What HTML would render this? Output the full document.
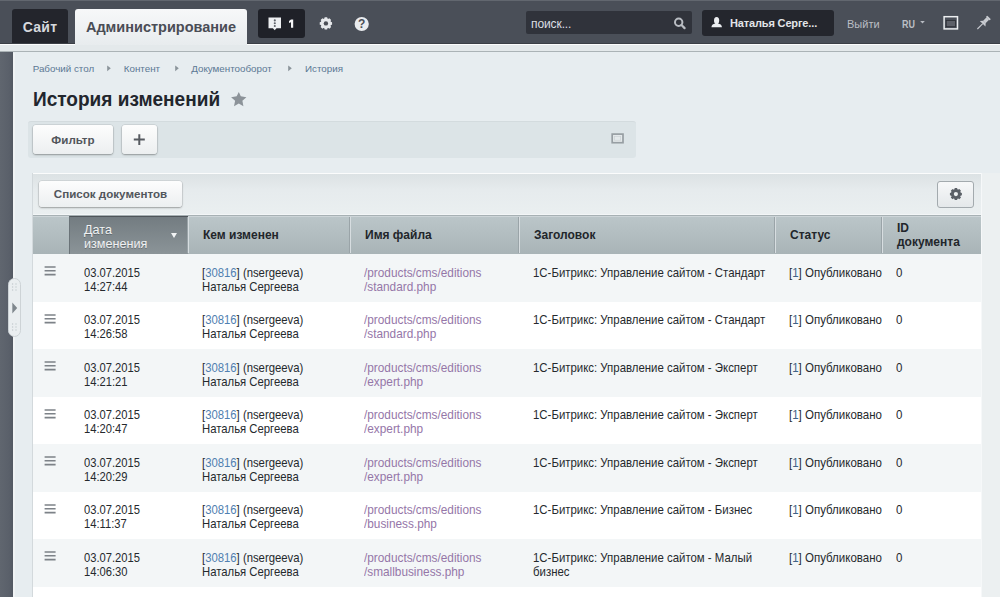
<!DOCTYPE html>
<html><head><meta charset="utf-8">
<style>
*{margin:0;padding:0;box-sizing:border-box}
html,body{width:1000px;height:597px;overflow:hidden;background:#e7edf0;font-family:"Liberation Sans",sans-serif}
.abs{position:absolute}
#top{position:absolute;left:0;top:0;width:1000px;height:43.5px;background:#4a4f58;border-top:1px solid #62676f;border-bottom:1px solid #3b3f46}
#strip{position:absolute;left:0;top:43.5px;width:1000px;height:7.5px;background:#e4e9eb;border-top:1.5px solid #fcfdfd}
#stripline{position:absolute;left:0;top:50.8px;width:1000px;height:1.5px;background:#abb3b6}
#side{position:absolute;left:0;top:52px;width:13px;height:545px;background:linear-gradient(90deg,#60666f,#5a606a 70%,#525862)}
#sidehl{position:absolute;left:13px;top:53px;width:2px;height:544px;background:#f0f3f4}
.tab-site{left:12px;top:9px;width:56px;height:34px;background:#23252c;border-radius:3px 3px 0 0;color:#d6d8dc;font-weight:bold;font-size:14px;line-height:36.2px;text-align:center;letter-spacing:0.3px}
.tab-adm{left:75px;top:9px;width:172px;height:36px;background:linear-gradient(#f7f8f9,#e8ecee);border-radius:3px 3px 0 0;color:#4a4d55;font-weight:bold;font-size:14.5px;line-height:36px;text-align:center}
.notif{left:258px;top:9px;width:47px;height:29px;background:#1f2128;border-radius:3px}
.search{left:526px;top:11px;width:166px;height:23px;background:#30333b;border-radius:2px;color:#dcdfe3;font-size:12px;line-height:26.4px;padding-left:5px;letter-spacing:-0.1px}
.user{left:702px;top:10px;width:132px;height:26px;background:#24262d;border-radius:3px;color:#e2e4e8;font-size:11px;font-weight:bold;line-height:26px;padding-left:28px;letter-spacing:-0.15px}
.exit{left:847px;top:17px;color:#babec4;font-size:11px;line-height:14px}
.ru{left:902px;top:16.6px;color:#bcc0c6;font-size:11.8px;font-weight:bold;line-height:14px;transform:scaleX(0.76);transform-origin:0 0}
.bc{top:62.6px;font-size:9.8px;color:#5b7894;line-height:12px}
.bcarr{top:65.4px;width:0;height:0;border-left:3.6px solid #8d969c;border-top:2.9px solid transparent;border-bottom:2.9px solid transparent}
.title{left:33.4px;top:88.4px;font-size:20px;font-weight:bold;color:#22262d;line-height:22px;transform:scaleX(0.952);transform-origin:0 0;white-space:nowrap}
#filter{left:28px;top:121px;width:608px;height:37px;background:#dce4e7;border-radius:3px;border-top:1px solid #d3dbde}
.btn{background:linear-gradient(#fdfdfd,#eceff0);border-radius:3px;box-shadow:0 1px 2px rgba(0,0,0,.3),0 0 0 0.5px rgba(0,0,0,.12);color:#52565c;font-weight:bold;font-size:11.6px;text-align:center}
#grid{left:33px;top:173px;width:948px;height:424px;background:#f3f6f7}
#gridtb{left:33px;top:173px;width:948px;height:42px;background:linear-gradient(#dce2e4,#e6ebed 40%,#eaeff0);border-top:1.5px solid #fbfcfc;border-bottom:1.5px solid #f3f6f7}
#hdr{left:33px;top:215px;width:948px;height:39.5px;background:linear-gradient(#bbc6c9,#a9b4b7);border-top:1px solid #a7b1b4;box-shadow:inset 0 1px 0 #cdd5d8;border-bottom:1.5px solid #8c969a}
.hcol{top:216px;height:38px;font-size:12px;font-weight:bold;color:#22262b;line-height:38px}
.vdiv{top:217px;width:2px;height:36px;border-left:1px solid #9aa4a8;border-right:1px solid #d7dde0}
.row{position:absolute;left:33px;width:948px;height:48px}
.row .cell{position:absolute;top:11.7px;font-size:12.4px;color:#25292d;line-height:14.2px;white-space:nowrap;transform-origin:0 0}
.row .lnk{color:#4f80b0}
.row .dt{transform:scaleX(0.903)}
.row .usr{transform:scaleX(0.913)}
.row .path{color:#9576a8;transform:scaleX(0.953)}
.row .ttl{transform:scaleX(0.921)}
.row .st{transform:scaleX(0.928)}
.row .ham{position:absolute}

</style></head><body>
<div id="top"></div>
<div id="strip"></div>
<div id="stripline"></div>
<div id="side"></div>
<div id="sidehl"></div>

<div class="abs tab-site">Сайт</div>
<div class="abs tab-adm">Администрирование</div>
<div class="abs notif"></div>
<div class="abs search">поиск...</div>
<div class="abs user">Наталья Серге...</div>
<svg class="abs" style="left:0;top:0" width="1000" height="43" viewBox="0 0 1000 43">
<path d="M268.5,17.6 H281 V28.3 H276.5 L274.7,30.2 L272.9,28.3 H268.5 Z" fill="#eef0f2"/>
<g fill="#5d6168"><circle cx="274.8" cy="20.4" r="1.05"/><circle cx="274.8" cy="23.2" r="1.05"/><circle cx="274.8" cy="26" r="1.05"/></g>
<path d="M291,19.6 H293.2 V27.7 H291 V22.3 L289,23 V21 Z" fill="#f3f4f6"/>
<path d="M330.53,21.79 L332.07,22.15 L332.07,24.65 L330.53,25.01 L330.31,25.54 L331.15,26.88 L329.38,28.65 L328.04,27.81 L327.51,28.03 L327.15,29.57 L324.65,29.57 L324.29,28.03 L323.76,27.81 L322.42,28.65 L320.65,26.88 L321.49,25.54 L321.27,25.01 L319.73,24.65 L319.73,22.15 L321.27,21.79 L321.49,21.26 L320.65,19.92 L322.42,18.15 L323.76,18.99 L324.29,18.77 L324.65,17.23 L327.15,17.23 L327.51,18.77 L328.04,18.99 L329.38,18.15 L331.15,19.92 L330.31,21.26Z" fill="#e6e8eb"/><circle cx="325.9" cy="23.4" r="5.00" fill="#e6e8eb"/><circle cx="325.9" cy="23.4" r="2.2" fill="#4b4e56"/>
<circle cx="361.7" cy="24" r="7.1" fill="#e9ebee"/>
<text x="361.7" y="28.4" text-anchor="middle" font-family="Liberation Sans" font-weight="bold" font-size="12" fill="#4b4e56">?</text>
<circle cx="678.7" cy="22.2" r="3.7" fill="none" stroke="#b9bdc3" stroke-width="2"/>
<path d="M681.5,25 L684.6,28.1" stroke="#b9bdc3" stroke-width="2.2" stroke-linecap="round"/>
<ellipse cx="716.6" cy="20.6" rx="2.6" ry="3.6" fill="#eceef1"/>
<path d="M711.5,27.3 C711.5,24.6 714,23.6 716.6,23.6 C719.2,23.6 721.9,24.6 721.9,27.3 Z" fill="#eceef1"/>
<path d="M920.2,21 H924.8 L922.5,23.4 Z" fill="#b8bcc2"/>
<rect x="944.1" y="16.7" width="13.4" height="12.2" fill="none" stroke="#eceef0" stroke-width="1.5"/>
<rect x="946.2" y="20.4" width="9.2" height="6.3" fill="#5d6068" stroke="#2a2c32" stroke-width="0.8"/>
<g transform="translate(983.2,23.2) rotate(45)" fill="#c9ccd1"><rect x="-2.6" y="-8.2" width="5.2" height="1.8" rx="0.6"/><rect x="-1.7" y="-6.6" width="3.4" height="5"/><path d="M-1.7,-1.8 L1.7,-1.8 L4,0.8 L-4,0.8 Z"/><rect x="-0.55" y="0.6" width="1.1" height="7.6"/></g>
</svg>

<div class="abs exit">Выйти</div>
<div class="abs ru">RU</div>

<div class="abs bc" style="left:32.7px">Рабочий стол</div>
<svg class="abs" style="left:107.2px;top:65px" width="5" height="7" viewBox="0 0 5 7"><path d="M0.2,0.4 L3.8,3.3 L0.2,6.2 Z" fill="#8b949a"/></svg>
<div class="abs bc" style="left:123.8px">Контент</div>
<svg class="abs" style="left:175.4px;top:65px" width="5" height="7" viewBox="0 0 5 7"><path d="M0.2,0.4 L3.8,3.3 L0.2,6.2 Z" fill="#8b949a"/></svg>
<div class="abs bc" style="left:191.2px">Документооборот</div>
<svg class="abs" style="left:288px;top:65px" width="5" height="7" viewBox="0 0 5 7"><path d="M0.2,0.4 L3.8,3.3 L0.2,6.2 Z" fill="#8b949a"/></svg>
<div class="abs bc" style="left:305px">История</div>

<div class="abs title">История изменений</div>

<div class="abs" id="filter"></div>
<svg class="abs" style="left:225px;top:86px" width="30" height="26" viewBox="225 86 30 26">
<path d="M238.8,92 L240.8,96.3 L246.4,97.3 L242.4,100.8 L243.4,106.2 L238.8,103.6 L234,106.2 L235.1,100.8 L231.1,97.3 L236.7,96.3 Z" fill="#8c9399"/>
</svg>
<svg class="abs" style="left:605px;top:128px" width="25" height="20" viewBox="605 128 25 20">
<rect x="612.2" y="134.1" width="10.8" height="8.6" fill="#e4e9eb" stroke="#979ea3" stroke-width="1.7"/><rect x="614.5" y="136.6" width="6.2" height="3.6" fill="none" stroke="#c9cfd2" stroke-width="0.6"/>
</svg>
<div class="abs btn" style="left:33px;top:125px;width:80px;height:29px;line-height:29px">Фильтр</div>
<div class="abs btn" style="left:122px;top:125px;width:35px;height:29px"></div>
<svg class="abs" style="left:122px;top:125px" width="35" height="29" viewBox="122 125 35 29"><path d="M139.3,134.2 V145 M133.8,139.6 H144.8" stroke="#575b61" stroke-width="2"/></svg>

<div class="abs" style="left:981px;top:173px;width:19px;height:424px;background:#ecf0f1;border-left:1.5px solid #f6f8f9"></div>
<div class="abs" id="grid"></div>
<div class="abs" id="gridtb"></div>
<div class="abs" style="left:32px;top:173px;width:1px;height:424px;background:#d3d9dc"></div>
<div class="abs btn" style="left:39px;top:181px;width:143px;height:26px;line-height:26px">Список документов</div>
<div class="abs btn" style="left:937px;top:181px;width:37px;height:27px;box-shadow:none;border:1px solid #a3aaae;background:linear-gradient(#f7f8f9,#e4e8ea)"></div>
<svg class="abs" style="left:937px;top:181px" width="37" height="28" viewBox="937 181 37 28">
<path d="M960.34,192.56 L961.88,192.89 L961.88,195.31 L960.34,195.64 L960.13,196.15 L960.99,197.47 L959.27,199.19 L957.95,198.33 L957.44,198.54 L957.11,200.08 L954.69,200.08 L954.36,198.54 L953.85,198.33 L952.53,199.19 L950.81,197.47 L951.67,196.15 L951.46,195.64 L949.92,195.31 L949.92,192.89 L951.46,192.56 L951.67,192.05 L950.81,190.73 L952.53,189.01 L953.85,189.87 L954.36,189.66 L954.69,188.12 L957.11,188.12 L957.44,189.66 L957.95,189.87 L959.27,189.01 L960.99,190.73 L960.13,192.05Z" fill="#5b6067"/><circle cx="955.9" cy="194.1" r="4.80" fill="#5b6067"/><circle cx="955.9" cy="194.1" r="2.1" fill="#eef1f2"/>
</svg>
<div class="abs" id="hdr"></div>
<div class="abs" style="left:69px;top:216px;width:118.5px;height:37.5px;background:linear-gradient(#737c81,#8b9498);border-top:1.2px solid #4f555a;border-left:1px solid #6a7378"></div>
<div class="abs hcol" style="left:84px;top:222.6px;line-height:14.3px;color:#f0f2f3;font-weight:normal;font-size:12.6px;text-shadow:0 1px 0 rgba(40,45,50,.35)">Дата<br>изменения</div>
<div class="abs" style="left:171.2px;top:233.4px;width:0;height:0;border-top:5px solid #f2f4f5;border-left:3.6px solid transparent;border-right:3.6px solid transparent"></div>
<div class="abs vdiv" style="left:187px"></div>
<div class="abs hcol" style="left:203px">Кем изменен</div>
<div class="abs vdiv" style="left:349px"></div>
<div class="abs hcol" style="left:365px">Имя файла</div>
<div class="abs vdiv" style="left:518px"></div>
<div class="abs hcol" style="left:534px">Заголовок</div>
<div class="abs vdiv" style="left:773.5px"></div>
<div class="abs hcol" style="left:790px">Статус</div>
<div class="abs vdiv" style="left:881px"></div>
<div class="abs hcol" style="left:897px;top:222.3px;line-height:13.8px">ID<br>документа</div>
<div class="row" style="top:254.0px;background:#f3f6f7">
<svg class="ham" style="left:11px;top:11px" width="13" height="12" viewBox="0 0 13 12"><path d="M0.6,2.0 H11.6 M0.6,5.8 H11.6 M0.6,9.6 H11.6" stroke="#7d8288" stroke-width="1.55"/></svg>
<div class="cell dt" style="left:51px">03.07.2015<br>14:27:44</div>
<div class="cell usr" style="left:169px">[<span class="lnk">30816</span>] (nsergeeva)<br>Наталья Сергеева</div>
<div class="cell path" style="left:331px">/products/cms/editions<br>/standard.php</div>
<div class="cell ttl" style="left:500px">1С-Битрикс: Управление сайтом - Стандарт</div>
<div class="cell st" style="left:756px">[<span style="color:#3f6387">1</span>] Опубликовано</div>
<div class="cell st" style="left:863px">0</div>
</div>
<div class="row" style="top:301.5px;background:#ffffff">
<svg class="ham" style="left:11px;top:11px" width="13" height="12" viewBox="0 0 13 12"><path d="M0.6,2.0 H11.6 M0.6,5.8 H11.6 M0.6,9.6 H11.6" stroke="#7d8288" stroke-width="1.55"/></svg>
<div class="cell dt" style="left:51px">03.07.2015<br>14:26:58</div>
<div class="cell usr" style="left:169px">[<span class="lnk">30816</span>] (nsergeeva)<br>Наталья Сергеева</div>
<div class="cell path" style="left:331px">/products/cms/editions<br>/standard.php</div>
<div class="cell ttl" style="left:500px">1С-Битрикс: Управление сайтом - Стандарт</div>
<div class="cell st" style="left:756px">[<span style="color:#3f6387">1</span>] Опубликовано</div>
<div class="cell st" style="left:863px">0</div>
</div>
<div class="row" style="top:349.0px;background:#f3f6f7">
<svg class="ham" style="left:11px;top:11px" width="13" height="12" viewBox="0 0 13 12"><path d="M0.6,2.0 H11.6 M0.6,5.8 H11.6 M0.6,9.6 H11.6" stroke="#7d8288" stroke-width="1.55"/></svg>
<div class="cell dt" style="left:51px">03.07.2015<br>14:21:21</div>
<div class="cell usr" style="left:169px">[<span class="lnk">30816</span>] (nsergeeva)<br>Наталья Сергеева</div>
<div class="cell path" style="left:331px">/products/cms/editions<br>/expert.php</div>
<div class="cell ttl" style="left:500px">1С-Битрикс: Управление сайтом - Эксперт</div>
<div class="cell st" style="left:756px">[<span style="color:#3f6387">1</span>] Опубликовано</div>
<div class="cell st" style="left:863px">0</div>
</div>
<div class="row" style="top:396.5px;background:#ffffff">
<svg class="ham" style="left:11px;top:11px" width="13" height="12" viewBox="0 0 13 12"><path d="M0.6,2.0 H11.6 M0.6,5.8 H11.6 M0.6,9.6 H11.6" stroke="#7d8288" stroke-width="1.55"/></svg>
<div class="cell dt" style="left:51px">03.07.2015<br>14:20:47</div>
<div class="cell usr" style="left:169px">[<span class="lnk">30816</span>] (nsergeeva)<br>Наталья Сергеева</div>
<div class="cell path" style="left:331px">/products/cms/editions<br>/expert.php</div>
<div class="cell ttl" style="left:500px">1С-Битрикс: Управление сайтом - Эксперт</div>
<div class="cell st" style="left:756px">[<span style="color:#3f6387">1</span>] Опубликовано</div>
<div class="cell st" style="left:863px">0</div>
</div>
<div class="row" style="top:444.0px;background:#f3f6f7">
<svg class="ham" style="left:11px;top:11px" width="13" height="12" viewBox="0 0 13 12"><path d="M0.6,2.0 H11.6 M0.6,5.8 H11.6 M0.6,9.6 H11.6" stroke="#7d8288" stroke-width="1.55"/></svg>
<div class="cell dt" style="left:51px">03.07.2015<br>14:20:29</div>
<div class="cell usr" style="left:169px">[<span class="lnk">30816</span>] (nsergeeva)<br>Наталья Сергеева</div>
<div class="cell path" style="left:331px">/products/cms/editions<br>/expert.php</div>
<div class="cell ttl" style="left:500px">1С-Битрикс: Управление сайтом - Эксперт</div>
<div class="cell st" style="left:756px">[<span style="color:#3f6387">1</span>] Опубликовано</div>
<div class="cell st" style="left:863px">0</div>
</div>
<div class="row" style="top:491.5px;background:#ffffff">
<svg class="ham" style="left:11px;top:11px" width="13" height="12" viewBox="0 0 13 12"><path d="M0.6,2.0 H11.6 M0.6,5.8 H11.6 M0.6,9.6 H11.6" stroke="#7d8288" stroke-width="1.55"/></svg>
<div class="cell dt" style="left:51px">03.07.2015<br>14:11:37</div>
<div class="cell usr" style="left:169px">[<span class="lnk">30816</span>] (nsergeeva)<br>Наталья Сергеева</div>
<div class="cell path" style="left:331px">/products/cms/editions<br>/business.php</div>
<div class="cell ttl" style="left:500px">1С-Битрикс: Управление сайтом - Бизнес</div>
<div class="cell st" style="left:756px">[<span style="color:#3f6387">1</span>] Опубликовано</div>
<div class="cell st" style="left:863px">0</div>
</div>
<div class="row" style="top:539.0px;background:#f3f6f7">
<svg class="ham" style="left:11px;top:11px" width="13" height="12" viewBox="0 0 13 12"><path d="M0.6,2.0 H11.6 M0.6,5.8 H11.6 M0.6,9.6 H11.6" stroke="#7d8288" stroke-width="1.55"/></svg>
<div class="cell dt" style="left:51px">03.07.2015<br>14:06:30</div>
<div class="cell usr" style="left:169px">[<span class="lnk">30816</span>] (nsergeeva)<br>Наталья Сергеева</div>
<div class="cell path" style="left:331px">/products/cms/editions<br>/smallbusiness.php</div>
<div class="cell ttl" style="left:500px">1С-Битрикс: Управление сайтом - Малый<br>бизнес</div>
<div class="cell st" style="left:756px">[<span style="color:#3f6387">1</span>] Опубликовано</div>
<div class="cell st" style="left:863px">0</div>
</div>
<div class="row" style="top:586.5px;background:#ffffff"></div>
<div class="abs" style="left:8px;top:277.5px;width:13px;height:59.5px;border-radius:6.5px;background:#eaeef0;border:1px solid #cdd3d6"></div>
<svg class="abs" style="left:8px;top:277px" width="14" height="61" viewBox="8 277 14 61">
<g fill="#c3c9cd"><circle cx="12.6" cy="284" r="0.7"/><circle cx="16" cy="284" r="0.7"/><circle cx="12.6" cy="287" r="0.7"/><circle cx="16" cy="287" r="0.7"/><circle cx="12.6" cy="290" r="0.7"/><circle cx="16" cy="290" r="0.7"/>
<circle cx="12.6" cy="324" r="0.7"/><circle cx="16" cy="324" r="0.7"/><circle cx="12.6" cy="327" r="0.7"/><circle cx="16" cy="327" r="0.7"/><circle cx="12.6" cy="330" r="0.7"/><circle cx="16" cy="330" r="0.7"/></g>
<path d="M12.3,302.6 L17.2,308 L12.3,313.4 Z" fill="#7f878d"/>
</svg>

</body></html>
